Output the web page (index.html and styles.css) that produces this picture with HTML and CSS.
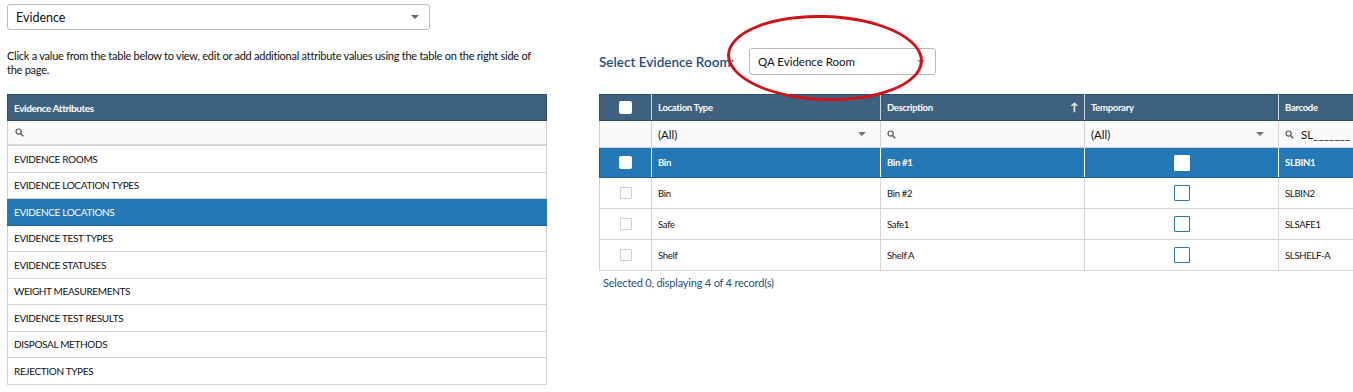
FILE: index.html
```html
<!DOCTYPE html>
<html lang="en">
<head>
    <meta charset="UTF-8">
    <title>Evidence Attributes</title>
    <link rel="stylesheet" href="styles.css">
</head>
<body>
    <div class="page">
        <div class="left-panel">
            <div class="select select-category">
                <span>Evidence</span>
                <span class="caret"></span>
            </div>
            <p class="hint">Click a value from the table below to view, edit or add additional attribute values using the table on the right side of the page.</p>

            <div class="attr-table">
                <div class="attr-head">Evidence Attributes</div>
                <div class="attr-search">
                    <svg class="search-icon" width="9" height="9" viewBox="0 0 9 9"><circle cx="3.6" cy="3.6" r="2.6" fill="none" stroke="#555" stroke-width="1.2"/><path d="M5.5 5.5 L8.3 8.3" stroke="#555" stroke-width="1.4"/></svg>
                </div>
                <div class="attr-row">EVIDENCE ROOMS</div>
                <div class="attr-row">EVIDENCE LOCATION TYPES</div>
                <div class="attr-row selected">EVIDENCE LOCATIONS</div>
                <div class="attr-row">EVIDENCE TEST TYPES</div>
                <div class="attr-row">EVIDENCE STATUSES</div>
                <div class="attr-row">WEIGHT MEASUREMENTS</div>
                <div class="attr-row">EVIDENCE TEST RESULTS</div>
                <div class="attr-row">DISPOSAL METHODS</div>
                <div class="attr-row">REJECTION TYPES</div>
            </div>
        </div>

        <div class="right-panel">
            <div class="room-bar">
                <label class="room-label">Select Evidence Room:</label>
                <div class="select select-room">
                    <span>QA Evidence Room</span>
                    <span class="caret"></span>
                </div>
                <div class="annotation"></div>
            </div>

            <table class="grid">
                <colgroup>
                    <col style="width:52px">
                    <col style="width:229px">
                    <col style="width:204px">
                    <col style="width:194px">
                    <col style="width:120px">
                </colgroup>
                <thead>
                    <tr class="grid-head">
                        <th class="cb-cell"><span class="cb cb-white"></span></th>
                        <th>Location Type</th>
                        <th class="sorted">Description <span class="sort-arrow">&#8593;</span></th>
                        <th>Temporary</th>
                        <th>Barcode</th>
                    </tr>
                    <tr class="grid-filter">
                        <td></td>
                        <td><div class="filter-drop">(All)<span class="caret"></span></div></td>
                        <td>
                            <svg class="search-icon" width="9" height="9" viewBox="0 0 9 9"><circle cx="3.6" cy="3.6" r="2.6" fill="none" stroke="#555" stroke-width="1.2"/><path d="M5.5 5.5 L8.3 8.3" stroke="#555" stroke-width="1.4"/></svg>
                        </td>
                        <td><div class="filter-drop">(All)<span class="caret"></span></div></td>
                        <td>
                            <svg class="search-icon" width="9" height="9" viewBox="0 0 9 9"><circle cx="3.6" cy="3.6" r="2.6" fill="none" stroke="#555" stroke-width="1.2"/><path d="M5.5 5.5 L8.3 8.3" stroke="#555" stroke-width="1.4"/></svg>
                            <span class="filter-text">SL_______</span>
                        </td>
                    </tr>
                </thead>
                <tbody>
                    <tr class="selected">
                        <td class="cb-cell"><span class="cb cb-white"></span></td>
                        <td>Bin</td>
                        <td>Bin #1</td>
                        <td class="center"><span class="cb cb-temp cb-temp-on"></span></td>
                        <td>SLBIN1</td>
                    </tr>
                    <tr>
                        <td class="cb-cell"><span class="cb cb-grey"></span></td>
                        <td>Bin</td>
                        <td>Bin #2</td>
                        <td class="center"><span class="cb cb-temp"></span></td>
                        <td>SLBIN2</td>
                    </tr>
                    <tr>
                        <td class="cb-cell"><span class="cb cb-grey"></span></td>
                        <td>Safe</td>
                        <td>Safe1</td>
                        <td class="center"><span class="cb cb-temp"></span></td>
                        <td>SLSAFE1</td>
                    </tr>
                    <tr>
                        <td class="cb-cell"><span class="cb cb-grey"></span></td>
                        <td>Shelf</td>
                        <td>Shelf A</td>
                        <td class="center"><span class="cb cb-temp"></span></td>
                        <td>SLSHELF-A</td>
                    </tr>
                </tbody>
            </table>
            <div class="grid-footer">Selected 0, displaying 4 of 4 record(s)</div>
        </div>
    </div>
</body>
</html>
```

FILE: styles.css
```css
* {
    margin: 0;
    padding: 0;
    box-sizing: border-box;
}

body {
    font-family: Lato, "Open Sans", Arial, sans-serif;
    background: #fff;
    color: #111;
    width: 1353px;
    height: 392px;
    overflow: hidden;
}

.page {
    display: flex;
    gap: 52px;
    padding-left: 7px;
}

/* Left side */
.left-panel {
    width: 540px;
    flex-shrink: 0;
}

.select {
    display: flex;
    align-items: center;
    justify-content: space-between;
    border: 1px solid #b9b9b9;
    border-radius: 3px;
    background: #fff;
    font-size: 12.5px;
    color: #111;
    padding: 0 10px 0 8px;
}

.select-category {
    margin-top: 4px;
    width: 423px;
    height: 26px;
}

.caret {
    width: 0;
    height: 0;
    border-left: 4px solid transparent;
    border-right: 4px solid transparent;
    border-top: 4px solid #666;
}

.hint {
    margin-top: 19px;
    font-size: 11px;
    line-height: 14px;
    letter-spacing: -0.25px;
    width: 530px;
}

.attr-table {
    margin-top: 17px;
    border-left: 1px solid #d4d4d4;
    border-right: 1px solid #d4d4d4;
}

.attr-head {
    height: 27px;
    background: #3f6180;
    border: 1px solid #2d4c69;
    margin: 0 -1px;
    color: #fff;
    font-size: 10px;
    font-weight: bold;
    letter-spacing: -0.4px;
    padding-left: 6px;
    display: flex;
    align-items: center;
}

.attr-search {
    height: 25px;
    background: #fafafa;
    border-bottom: 2px solid #d8d8d8;
    display: flex;
    align-items: center;
    padding-left: 7px;
}

.attr-row {
    height: 26.5px;
    border-bottom: 1px solid #d4d4d4;
    font-size: 10px;
    letter-spacing: -0.35px;
    padding-left: 6px;
    display: flex;
    align-items: center;
}

.attr-row.selected {
    background: #2378b5;
    color: #fff;
    margin: 0 -1px;
    padding-left: 7px;
    border-bottom: 1px solid #185f92;
}

/* Right side */
.right-panel {
    flex: 1;
    min-width: 0;
}

.room-bar {
    position: relative;
    display: flex;
    align-items: center;
    margin-top: 48px;
    height: 27px;
}

.room-label {
    width: 150px;
    font-size: 13.5px;
    font-weight: 600;
    color: #1f4f7d;
}

.select-room {
    width: 187px;
    height: 27px;
    font-size: 11.5px;
    padding-left: 8px;
}

.select-room .caret {
    border-top-color: #999;
}

.annotation {
    position: absolute;
    left: 128px;
    top: -33px;
    width: 196px;
    height: 86px;
    border: 3.5px solid #cf1318;
    border-radius: 50%;
    transform: rotate(2deg);
}

.grid {
    margin-top: 19px;
    border-collapse: collapse;
    table-layout: fixed;
    width: 799px;
    font-size: 9.5px;
    letter-spacing: -0.3px;
}

.grid th,
.grid td {
    text-align: left;
    padding: 0 6px;
    border: 1px solid #d4d4d4;
    white-space: nowrap;
    overflow: hidden;
}

.grid-head th {
    height: 26px;
    background: #3f6180;
    color: #fff;
    font-weight: bold;
    border: 1px solid #d4d4d4;
    border-top: 1px solid #2d4c69;
    border-bottom: 1px solid #2d4c69;
}

.grid-head th:first-child {
    border-left-color: #2d4c69;
}

.grid-head .sorted {
    position: relative;
}

.sort-arrow {
    position: absolute;
    right: 6px;
    top: 5px;
    font-size: 11px;
}

.grid-filter td {
    height: 27px;
    background: #fafafa;
    font-size: 11.5px;
    letter-spacing: 0;
}

.filter-drop {
    display: flex;
    align-items: center;
    justify-content: space-between;
    padding-right: 8px;
}

.filter-drop .caret {
    border-top-color: #777;
}

.filter-text {
    margin-left: 4px;
    font-size: 11.5px;
}

.grid tbody td {
    height: 31px;
}

.grid tbody tr.selected td {
    height: 30px;
    background: #2378b5;
    color: #fff;
    font-weight: bold;
    border-color: #fff;
    border-top-color: #185f92;
    border-bottom-color: #185f92;
}

.grid tbody tr.selected td:first-child {
    border-left-color: #185f92;
}

.cb-cell,
.center {
    text-align: center !important;
}

.cb {
    display: inline-block;
    vertical-align: middle;
}

.cb-white {
    width: 13px;
    height: 13px;
    background: #fff;
    border-radius: 2px;
}

.cb-grey {
    width: 12px;
    height: 12px;
    border: 1px solid #d0d0d0;
    border-radius: 1px;
}

.cb-temp {
    width: 16px;
    height: 16px;
    border: 1.5px solid #2e74b0;
    border-radius: 1px;
}

.cb-temp-on {
    background: #fff;
    border-color: #fff;
}

.grid-footer {
    margin-top: 5px;
    padding-left: 4px;
    font-size: 11px;
    color: #1f4f7d;
    letter-spacing: -0.2px;
}
```
